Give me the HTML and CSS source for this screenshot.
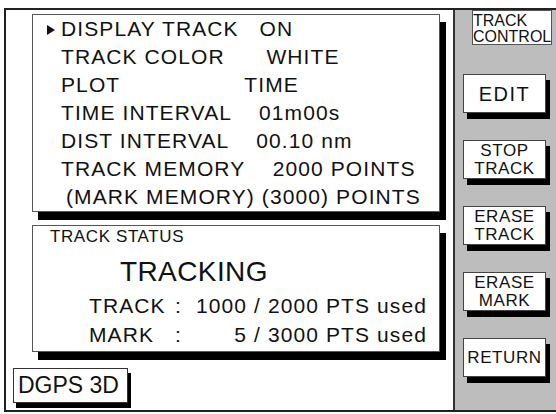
FILE: index.html
```html
<!DOCTYPE html>
<html lang="en">
<head>
    <meta charset="UTF-8">
    <title>Track Control</title>
    <link rel="stylesheet" href="styles.css">
</head>
<body>
    <div class="screen">
        <!-- Main display area -->
        <div class="main">
            <div class="panel settings">
                <div class="row"><svg class="pointer" width="8" height="10" viewBox="0 0 8 10"><polygon points="0,0 8,5 0,10" fill="#111"/></svg>DISPLAY TRACK   ON</div>
                <div class="row">TRACK COLOR      WHITE</div>
                <div class="row">PLOT                  TIME</div>
                <div class="row">TIME INTERVAL    01m00s</div>
                <div class="row">DIST INTERVAL    00.10 nm</div>
                <div class="row">TRACK MEMORY    2000 POINTS</div>
                <div class="row indent">(MARK MEMORY) (3000) POINTS</div>
            </div>

            <div class="panel status">
                <div class="status-title">TRACK STATUS</div>
                <div class="status-state">TRACKING</div>
                <div class="status-row">
                    <span>TRACK</span><span>:</span><span class="count">1000 / 2000 PTS used</span>
                </div>
                <div class="status-row">
                    <span>MARK</span><span>:</span><span class="count">5 / 3000 PTS used</span>
                </div>
            </div>

            <div class="fix">DGPS 3D</div>
        </div>

        <!-- Soft key column -->
        <div class="side">
            <div class="menu-title">TRACK<br>CONTROL</div>
            <div class="keys">
                <div class="key big">EDIT</div>
                <div class="key">STOP<br>TRACK</div>
                <div class="key">ERASE<br>TRACK</div>
                <div class="key">ERASE<br>MARK</div>
                <div class="key">RETURN</div>
            </div>
        </div>
    </div>
</body>
</html>
```

FILE: styles.css
```css
* {
    margin: 0;
    padding: 0;
    box-sizing: border-box;
}

body {
    background: #fff;
    color: #111;
    font-family: 'Liberation Sans', Arial, sans-serif;
}

.screen {
    margin: 8px 0 0 4px;
    width: 552px;
    height: 404px;
    border: 2px solid #222;
    border-right: none;
    display: flex;
}

/* Main area */
.main {
    width: 447px;
    padding: 4px 0 0 7px;
}

.panel {
    margin-left: 19px;
    width: 408px;
    background: #fff;
    border: 1px solid #555;
    box-shadow: 6px 8px 0 #000;
}

.settings {
    height: 198px;
}

.settings .row {
    padding-left: 28px;
    font-size: 21px;
    line-height: 28px;
    letter-spacing: 1.1px;
    white-space: pre;
}

.settings .row.indent {
    padding-left: 33px;
}

.pointer {
    display: inline-block;
    margin-left: -14px;
    margin-right: 6px;
    vertical-align: 1px;
}

.status {
    margin-top: 13px;
    height: 127px;
    padding: 1px 12px 0 17px;
}

.status-title {
    font-size: 17px;
    line-height: 20px;
    letter-spacing: 0.6px;
}

.status-state {
    margin: 8px 0 0 70px;
    font-size: 28px;
    line-height: 34px;
    letter-spacing: 0.4px;
}

.status-row {
    margin: 2px 0 0 39px;
    display: grid;
    grid-template-columns: 86px 10px 1fr;
    font-size: 21px;
    line-height: 29px;
    letter-spacing: 1.1px;
}

.status-row + .status-row {
    margin-top: 0;
}

.status-row .count {
    text-align: right;
}

.fix {
    margin-top: 16px;
    width: 115px;
    height: 35px;
    padding-left: 4px;
    border: 1px solid #333;
    box-shadow: 3px 5px 0 #000;
    font-size: 23px;
    line-height: 33px;
}

/* Side keys */
.side {
    width: 103px;
    background: #bdbdbd;
    border-left: 2px solid #333;
    padding-left: 8px;
}

.menu-title {
    margin-left: 9px;
    width: 80px;
    height: 35px;
    padding-top: 2px;
    background: #fff;
    border: 1px solid #555;
    font-size: 16px;
    line-height: 16px;
    white-space: nowrap;
}

.keys {
    margin-top: 29px;
    display: flex;
    flex-direction: column;
    gap: 27px;
}

.key {
    width: 83px;
    height: 39px;
    background: #fff;
    border: 1px solid #444;
    box-shadow: 4px 6px 0 #000;
    display: flex;
    align-items: center;
    justify-content: center;
    text-align: center;
    font-size: 17px;
    line-height: 18px;
    letter-spacing: 0.6px;
}

.key.big {
    font-size: 20px;
    letter-spacing: 1.5px;
}
```
